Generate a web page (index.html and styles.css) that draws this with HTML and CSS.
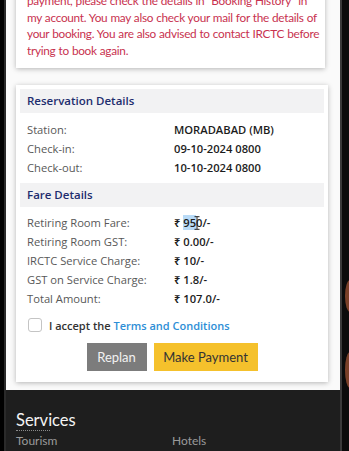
FILE: index.html
```html
<!DOCTYPE html>
<html>
<head>
<meta charset="utf-8">
<link rel="stylesheet" href="styles.css">
</head>
<body>
<div class="device">
  <div class="bezel-left"></div>
  <div class="screen">
    <div class="page">
      <div class="card msg">
        <p>payment, please check the details in "Booking History" in<br>my account. You may also check your mail for the details of<br>your booking. You are also advised to contact IRCTC before<br>trying to book again.</p>
      </div>
      <div class="card details">
        <div class="sec-head">Reservation Details</div>
        <div class="rows">
          <div class="row"><span class="lbl">Station:</span><span class="val">MORADABAD (MB)</span></div>
          <div class="row"><span class="lbl">Check-in:</span><span class="val">09-10-2024 0800</span></div>
          <div class="row"><span class="lbl">Check-out:</span><span class="val">10-10-2024 0800</span></div>
        </div>
        <div class="sec-head">Fare Details</div>
        <div class="rows fare">
          <div class="row"><span class="lbl">Retiring Room Fare:</span><span class="val">₹ <span class="sel">95</span><span class="caret-wrap"><svg class="ibeam" width="6" height="14" viewBox="0 0 6 14"><path d="M0.5 0.7h2.5M3 0.7h2.5M3 0.7v12.6M0.5 13.3h2.5M3 13.3h2.5" stroke="#222" stroke-width="1" fill="none"/></svg></span>0/-</span></div>
          <div class="row"><span class="lbl">Retiring Room GST:</span><span class="val">₹ 0.00/-</span></div>
          <div class="row"><span class="lbl">IRCTC Service Charge:</span><span class="val">₹ 10/-</span></div>
          <div class="row"><span class="lbl">GST on Service Charge:</span><span class="val">₹ 1.8/-</span></div>
          <div class="row"><span class="lbl">Total Amount:</span><span class="val">₹ 107.0/-</span></div>
        </div>
        <label class="accept"><span class="box"></span><span>I accept the <span class="link">Terms and Conditions</span></span></label>
        <div class="actions">
          <button class="btn replan">Replan</button>
          <button class="btn pay">Make Payment</button>
        </div>
      </div>
    </div>
    <div class="footer">
      <h3 class="f-title">Services</h3>
      <div class="f-links"><span>Tourism</span><span>Hotels</span></div>
    </div>
  </div>
  <div class="bezel-right"><span class="blob b1"></span><span class="blob b2"></span></div>
</div>
</body>
</html>
```
FILE: styles.css
```css
* { box-sizing: border-box; }
html, body { margin: 0; padding: 0; background: #000; }
body { width: 349px; height: 451px; overflow: hidden; font-family: "Open Sans", "Noto Sans", sans-serif; }
.device { display: flex; height: 451px; }
.bezel-left { width: 6px; background: linear-gradient(90deg, #000 0 4px, #2a2a2a 4px 6px); flex: none; }
.screen { width: 334px; flex: none; display: flex; flex-direction: column; overflow: hidden; background: #1e1e1e; }
.bezel-right { flex: 1; position: relative; background: linear-gradient(90deg, #3a3a3a 0 2px, #0b0b0b 2px 100%); overflow: hidden; }
.blob { position: absolute; left: 5px; width: 10px; border-radius: 50%; background: #7a4028; }
.b1 { top: 280px; height: 32px; }
.b2 { top: 352px; height: 36px; }

.page { background: #fafafa; padding: 0 12px 8px 10px; display: flex; flex-direction: column; gap: 17px; height: 390px; }
.card { background: #fff; box-shadow: 0 1px 5px rgba(0,0,0,0.28); }
.msg { margin-top: -7px; padding: 0 4px 8px 11px; width: 309px; }
.msg p { margin: 0; font-family: "Lato", sans-serif; font-size: 11.8px; line-height: 16.7px; color: #c8324f; white-space: nowrap; letter-spacing: -0.28px; word-spacing: 0.3px; }
.details { padding: 4px 4px 11px 4px; width: 312px; }
.sec-head { background: #f2f2f3; height: 24px; display: flex; align-items: center; padding-left: 7px; font-family: "Open Sans", sans-serif; font-weight: 600; font-size: 11.5px; color: #1d2d6e; }
.rows { padding: 7px 0 6px 7px; }
.rows.fare { padding-top: 6px; padding-bottom: 6px; }
.row { display: grid; grid-template-columns: 147px 1fr; height: 19px; align-items: center; font-size: 11.2px; }
.lbl { color: #585858; }
.val { color: #1c1c1c; font-weight: 600; font-size: 11.2px; }
.sel { background: #b9dbf7; }
.caret-wrap { position: relative; display: inline-block; width: 0; }
.ibeam { position: absolute; left: -2px; top: -11px; }
.accept { display: flex; align-items: center; gap: 7px; padding: 4px 0 0 8px; font-size: 11px; color: #333; font-weight: 600; }
.box { width: 14px; height: 14px; border: 1px solid #c4c4c4; border-radius: 3px; background: #fff; }
.link { color: #2d8ed6; }
.actions { display: flex; justify-content: center; gap: 7px; margin-top: 10px; padding-left: 34px; padding-right: 34px; }
.btn { border: 0; height: 28px; font-family: "Lato", sans-serif; font-size: 13px; padding: 0; }
.replan { width: 60px; background: #7c7c7c; color: #f2f2f2; }
.pay { width: 104px; background: #f5c12c; color: #333; }

.footer { flex: 1; background: #1e1e1e; padding: 21px 10px 0 10px; }
.f-title { position: relative; margin: 0; font-family: "Lato", sans-serif; font-weight: 400; font-size: 16.5px; color: #f4f4f4; line-height: 18px; padding-bottom: 2px; }
.f-title::after { content: ""; position: absolute; left: 0; bottom: 0; width: 34px; border-bottom: 1px dotted #8a8a8a; }
.f-links { display: grid; grid-template-columns: 156px 1fr; font-family: "Lato", sans-serif; font-size: 12px; color: #9a9a9a; margin-top: 2px; }
```
